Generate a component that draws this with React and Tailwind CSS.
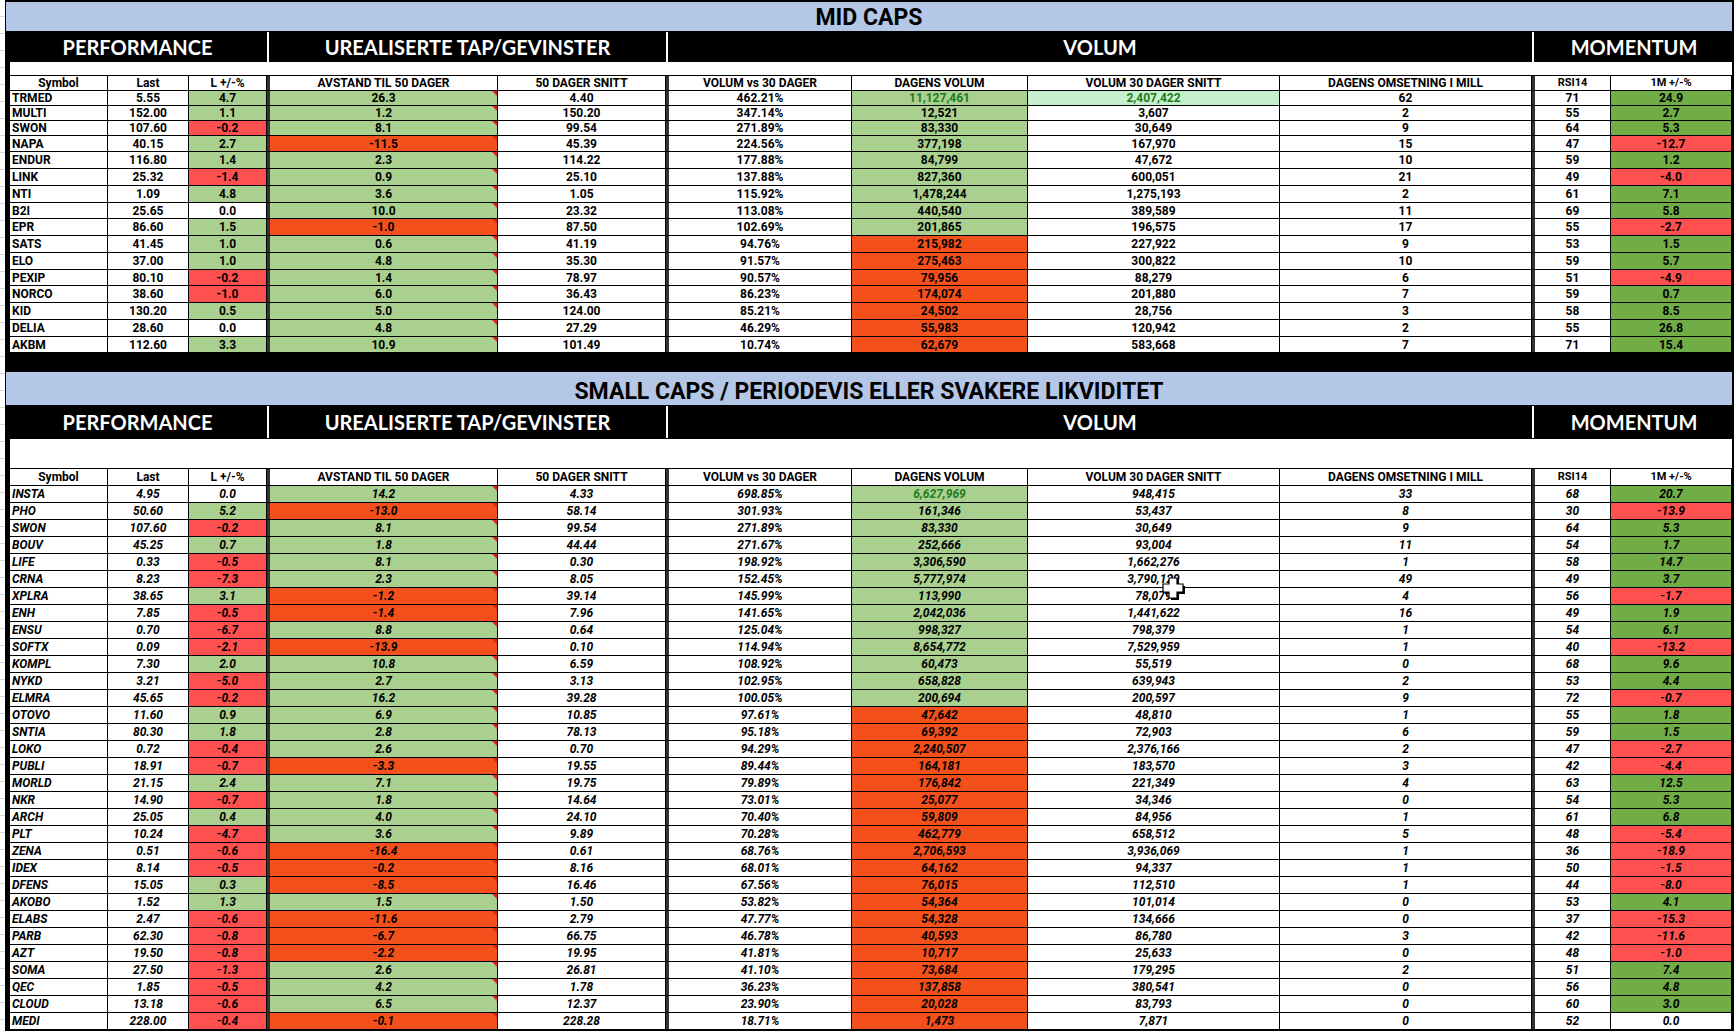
import React from "react";

const midCaps = [
  ["TRMED", "5.55", "4.7", "26.3", "4.40", "462.21%", "11,127,461", "2,407,422", "62", "71", "24.9"],
  ["MULTI", "152.00", "1.1", "1.2", "150.20", "347.14%", "12,521", "3,607", "2", "55", "2.7"],
  ["SWON", "107.60", "-0.2", "8.1", "99.54", "271.89%", "83,330", "30,649", "9", "64", "5.3"],
  ["NAPA", "40.15", "2.7", "-11.5", "45.39", "224.56%", "377,198", "167,970", "15", "47", "-12.7"],
  ["ENDUR", "116.80", "1.4", "2.3", "114.22", "177.88%", "84,799", "47,672", "10", "59", "1.2"],
  ["LINK", "25.32", "-1.4", "0.9", "25.10", "137.88%", "827,360", "600,051", "21", "49", "-4.0"],
  ["NTI", "1.09", "4.8", "3.6", "1.05", "115.92%", "1,478,244", "1,275,193", "2", "61", "7.1"],
  ["B2I", "25.65", "0.0", "10.0", "23.32", "113.08%", "440,540", "389,589", "11", "69", "5.8"],
  ["EPR", "86.60", "1.5", "-1.0", "87.50", "102.69%", "201,865", "196,575", "17", "55", "-2.7"],
  ["SATS", "41.45", "1.0", "0.6", "41.19", "94.76%", "215,982", "227,922", "9", "53", "1.5"],
  ["ELO", "37.00", "1.0", "4.8", "35.30", "91.57%", "275,463", "300,822", "10", "59", "5.7"],
  ["PEXIP", "80.10", "-0.2", "1.4", "78.97", "90.57%", "79,956", "88,279", "6", "51", "-4.9"],
  ["NORCO", "38.60", "-1.0", "6.0", "36.43", "86.23%", "174,074", "201,880", "7", "59", "0.7"],
  ["KID", "130.20", "0.5", "5.0", "124.00", "85.21%", "24,502", "28,756", "3", "58", "8.5"],
  ["DELIA", "28.60", "0.0", "4.8", "27.29", "46.29%", "55,983", "120,942", "2", "55", "26.8"],
  ["AKBM", "112.60", "3.3", "10.9", "101.49", "10.74%", "62,679", "583,668", "7", "71", "15.4"],
];

const smallCaps = [
  ["INSTA", "4.95", "0.0", "14.2", "4.33", "698.85%", "6,627,969", "948,415", "33", "68", "20.7"],
  ["PHO", "50.60", "5.2", "-13.0", "58.14", "301.93%", "161,346", "53,437", "8", "30", "-13.9"],
  ["SWON", "107.60", "-0.2", "8.1", "99.54", "271.89%", "83,330", "30,649", "9", "64", "5.3"],
  ["BOUV", "45.25", "0.7", "1.8", "44.44", "271.67%", "252,666", "93,004", "11", "54", "1.7"],
  ["LIFE", "0.33", "-0.5", "8.1", "0.30", "198.92%", "3,306,590", "1,662,276", "1", "58", "14.7"],
  ["CRNA", "8.23", "-7.3", "2.3", "8.05", "152.45%", "5,777,974", "3,790,129", "49", "49", "3.7"],
  ["XPLRA", "38.65", "3.1", "-1.2", "39.14", "145.99%", "113,990", "78,079", "4", "56", "-1.7"],
  ["ENH", "7.85", "-0.5", "-1.4", "7.96", "141.65%", "2,042,036", "1,441,622", "16", "49", "1.9"],
  ["ENSU", "0.70", "-6.7", "8.8", "0.64", "125.04%", "998,327", "798,379", "1", "54", "6.1"],
  ["SOFTX", "0.09", "-2.1", "-13.9", "0.10", "114.94%", "8,654,772", "7,529,959", "1", "40", "-13.2"],
  ["KOMPL", "7.30", "2.0", "10.8", "6.59", "108.92%", "60,473", "55,519", "0", "68", "9.6"],
  ["NYKD", "3.21", "-5.0", "2.7", "3.13", "102.95%", "658,828", "639,943", "2", "53", "4.4"],
  ["ELMRA", "45.65", "-0.2", "16.2", "39.28", "100.05%", "200,694", "200,597", "9", "72", "-0.7"],
  ["OTOVO", "11.60", "0.9", "6.9", "10.85", "97.61%", "47,642", "48,810", "1", "55", "1.8"],
  ["SNTIA", "80.30", "1.8", "2.8", "78.13", "95.18%", "69,392", "72,903", "6", "59", "1.5"],
  ["LOKO", "0.72", "-0.4", "2.6", "0.70", "94.29%", "2,240,507", "2,376,166", "2", "47", "-2.7"],
  ["PUBLI", "18.91", "-0.7", "-3.3", "19.55", "89.44%", "164,181", "183,570", "3", "42", "-4.4"],
  ["MORLD", "21.15", "2.4", "7.1", "19.75", "79.89%", "176,842", "221,349", "4", "63", "12.5"],
  ["NKR", "14.90", "-0.7", "1.8", "14.64", "73.01%", "25,077", "34,346", "0", "54", "5.3"],
  ["ARCH", "25.05", "0.4", "4.0", "24.10", "70.40%", "59,809", "84,956", "1", "61", "6.8"],
  ["PLT", "10.24", "-4.7", "3.6", "9.89", "70.28%", "462,779", "658,512", "5", "48", "-5.4"],
  ["ZENA", "0.51", "-0.6", "-16.4", "0.61", "68.76%", "2,706,593", "3,936,069", "1", "36", "-18.9"],
  ["IDEX", "8.14", "-0.5", "-0.2", "8.16", "68.01%", "64,162", "94,337", "1", "50", "-1.5"],
  ["DFENS", "15.05", "0.3", "-8.5", "16.46", "67.56%", "76,015", "112,510", "1", "44", "-8.0"],
  ["AKOBO", "1.52", "1.3", "1.5", "1.50", "53.82%", "54,364", "101,014", "0", "53", "4.1"],
  ["ELABS", "2.47", "-0.6", "-11.6", "2.79", "47.77%", "54,328", "134,666", "0", "37", "-15.3"],
  ["PARB", "62.30", "-0.8", "-6.7", "66.75", "46.78%", "40,593", "86,780", "3", "42", "-11.6"],
  ["AZT", "19.50", "-0.8", "-2.2", "19.95", "41.81%", "10,717", "25,633", "0", "48", "-1.0"],
  ["SOMA", "27.50", "-1.3", "2.6", "26.81", "41.10%", "73,684", "179,295", "2", "51", "7.4"],
  ["QEC", "1.85", "-0.5", "4.2", "1.78", "36.23%", "137,858", "380,541", "0", "56", "4.8"],
  ["CLOUD", "13.18", "-0.6", "6.5", "12.37", "23.90%", "20,028", "83,793", "0", "60", "3.0"],
  ["MEDI", "228.00", "-0.4", "-0.1", "228.28", "18.71%", "1,473", "7,871", "0", "52", "0.0"],
];

// mid caps rows are not all the same height in the sheet
const midHeights = [
  "h-[15px]", "h-[15px]", "h-[15px]", "h-[16px]",
  "h-[17px]", "h-[17px]", "h-[17px]", "h-[16px]",
  "h-[17px]", "h-[17px]", "h-[17px]", "h-[16px]",
  "h-[17px]", "h-[17px]", "h-[17px]", "h-[16px]",
];

const GRID = "grid grid-cols-[98px_81px_78px_231px_168px_186px_176px_252px_252px_79px_121px]";
const SEP = "border-l-[3px] border-l-[#333333]";

const GREEN = "bg-[#A9D08E]";
const RED = "bg-[#FF5050]";
const ORANGE = "bg-[#F4501C]";
const DARK_GREEN = "bg-[#70AD47]";

function signBg(v, pos, neg) {
  const n = parseFloat(v);
  if (n > 0) return pos;
  if (n < 0) return neg;
  return "bg-white";
}

function Cell({ children, className = "", left, tri }) {
  return (
    <div
      className={`relative flex items-center border-r border-black overflow-hidden whitespace-nowrap ${left ? "justify-start pl-[2px]" : "justify-center"} ${className}`}
    >
      {children}
      {tri && (
        <span className="absolute right-0 top-0 w-0 h-0 border-l-[5px] border-l-transparent border-t-[5px] border-t-[#E8201A]" />
      )}
    </div>
  );
}

function DataRow({ r, h, italic, first }) {
  const pct = parseFloat(r[5]);
  const volBg = pct >= 100 ? GREEN : ORANGE;
  return (
    <div className={`${GRID} ${h} border-b border-black bg-white text-[12px] font-bold text-black ${italic ? "italic" : ""}`}>
      <Cell left>{r[0]}</Cell>
      <Cell>{r[1]}</Cell>
      <Cell className={signBg(r[2], GREEN, RED)}>{r[2]}</Cell>
      <Cell className={`${SEP} ${signBg(r[3], GREEN, ORANGE)}`} tri>{r[3]}</Cell>
      <Cell>{r[4]}</Cell>
      <Cell className={SEP}>{r[5]}</Cell>
      <Cell className={`${volBg} ${first ? "text-[#1E7B1E]" : ""}`}>{r[6]}</Cell>
      <Cell className={first && !italic ? "bg-[#C6EFCE] text-[#1E7B1E]" : ""}>{r[7]}</Cell>
      <Cell>{r[8]}</Cell>
      <Cell className={SEP}>{r[9]}</Cell>
      <Cell className={signBg(r[10], DARK_GREEN, RED)}>{r[10]}</Cell>
    </div>
  );
}

function ColHeader({ h }) {
  return (
    <div className={`${GRID} ${h} border-b border-black bg-white text-[12px] font-bold text-black`}>
      <Cell>Symbol</Cell>
      <Cell>Last</Cell>
      <Cell>L +/-%</Cell>
      <Cell className={SEP}>AVSTAND TIL 50 DAGER</Cell>
      <Cell>50 DAGER SNITT</Cell>
      <Cell className={SEP}>VOLUM vs 30 DAGER</Cell>
      <Cell>DAGENS VOLUM</Cell>
      <Cell>VOLUM 30 DAGER SNITT</Cell>
      <Cell>DAGENS OMSETNING I MILL</Cell>
      <Cell className={`${SEP} text-[11px]`}>RSI14</Cell>
      <Cell className="text-[11px]">1M +/-%</Cell>
    </div>
  );
}

function SectionBand({ h }) {
  return (
    <div className={`grid grid-cols-[262px_399px_866px_202px] ${h} bg-black text-white font-[Lato,sans-serif] font-bold text-[20px]`}>
      <div className="flex items-center justify-center pl-[3px]">PERFORMANCE</div>
      <div className="flex items-center justify-center border-l-2 border-white my-px">UREALISERTE TAP/GEVINSTER</div>
      <div className="flex items-center justify-center border-l-2 border-white my-px">VOLUM</div>
      <div className="flex items-center justify-center border-l-2 border-white my-px">MOMENTUM</div>
    </div>
  );
}

function Title({ children, className }) {
  return (
    <div className={`ml-px mr-[2px] bg-[#B4C7E7] flex items-center justify-center text-[23px] font-bold text-black ${className}`}>
      {children}
    </div>
  );
}

function Cursor() {
  return (
    <svg className="absolute left-[1157px] top-[577px]" width="26" height="26" viewBox="0 0 26 26">
      <path d="M9 3h8v6h6v8h-6v6H9v-6H3V9h6z" fill="#000" />
      <path d="M7 1h8v6h6v8h-6v6H7v-6H1V7h6z" fill="#fff" stroke="#000" strokeWidth="1.2" />
    </svg>
  );
}

export default function App() {
  return (
    <div className="w-[1734px] h-[1031px] flex bg-white overflow-hidden font-[Roboto,sans-serif]">
      <div className="w-[5px] shrink-0 bg-[repeating-linear-gradient(to_bottom,transparent_0px,transparent_16px,#d9d9d9_16px,#d9d9d9_17px)]" />
      <div className="relative w-[1729px] shrink-0 bg-black">
        <div className="h-[2px]" />
        <Title className="h-[29px] pt-[4px]">MID CAPS</Title>
        <SectionBand h="h-[31px]" />
        <div className="ml-[5px] mr-[2px]">
          <div className="h-[14px] bg-white border-b border-black" />
          <ColHeader h="h-[15px]" />
          {midCaps.map((r, i) => (
            <DataRow key={r[0]} r={r} h={midHeights[i]} first={i === 0} />
          ))}
        </div>
        <div className="h-[19px]" />
        <Title className="h-[33px] pt-[8px]">SMALL CAPS / PERIODEVIS ELLER SVAKERE LIKVIDITET</Title>
        <SectionBand h="h-[34px]" />
        <div className="ml-[5px] mr-[2px]">
          <div className="h-[30px] bg-white border-b border-black" />
          <ColHeader h="h-[17px]" />
          {smallCaps.map((r, i) => (
            <DataRow key={r[0] + i} r={r} h="h-[17px]" italic first={i === 0} />
          ))}
        </div>
        <Cursor />
      </div>
    </div>
  );
}
